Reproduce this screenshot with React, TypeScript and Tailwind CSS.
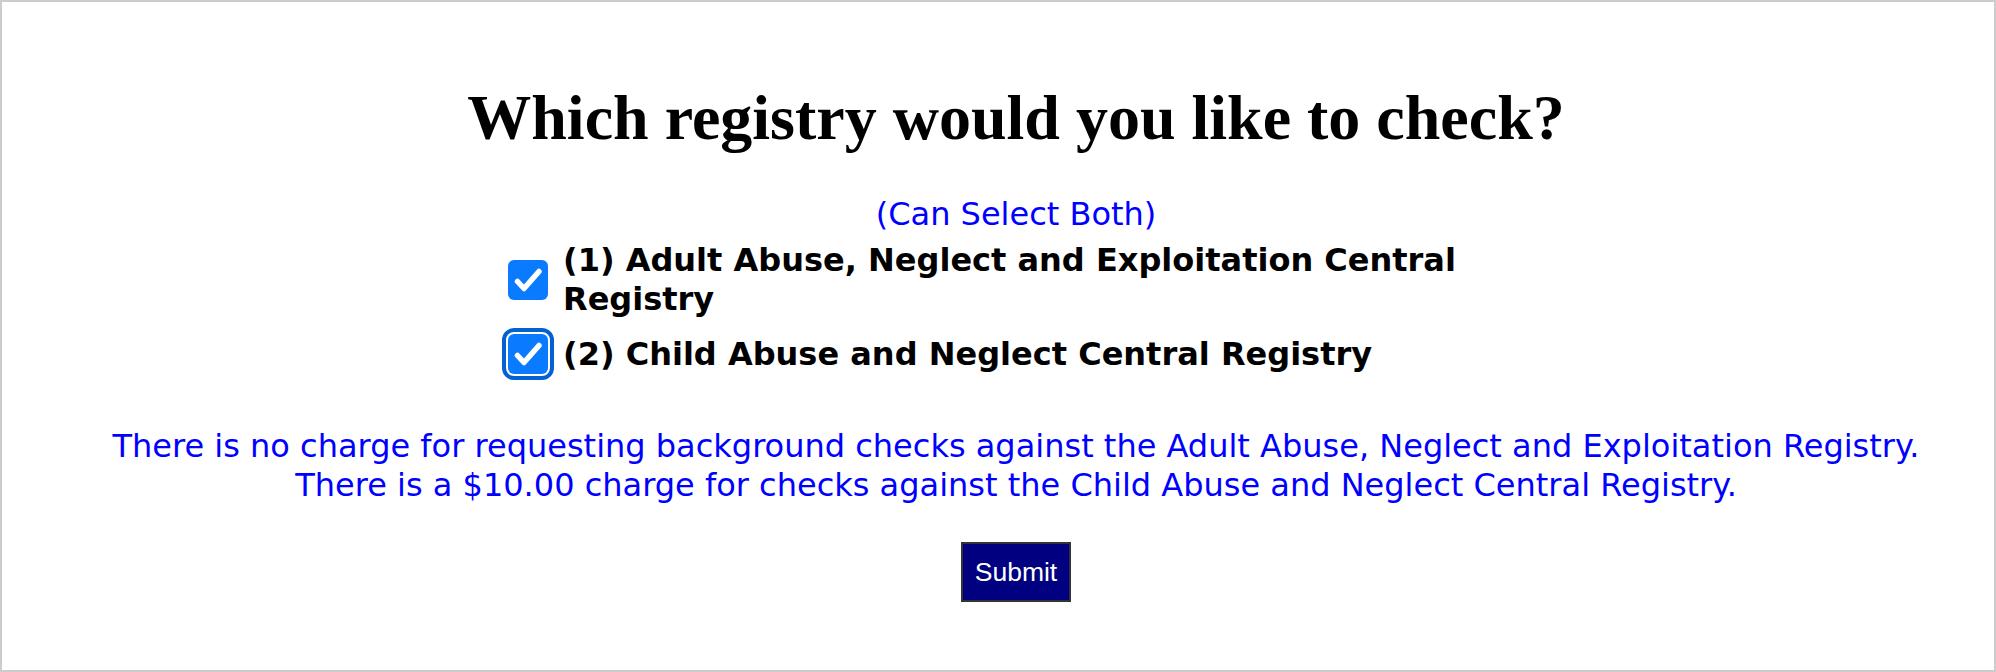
import { useState } from "react";

const CheckMark = () => (
  <svg width="40" height="40" viewBox="0 0 40 40" fill="none">
    <path
      d="M9.5 21.5L16 28.5L31 11.5"
      stroke="white"
      strokeWidth="5.5"
      strokeLinecap="round"
      strokeLinejoin="round"
    />
  </svg>
);

const RegistryOption = ({
  checked,
  focused,
  onToggle,
  label,
}: {
  checked: boolean;
  focused?: boolean;
  onToggle: () => void;
  label: string;
}) => (
  <label className="flex flex-row items-center cursor-pointer">
    <button
      type="button"
      onClick={onToggle}
      className={
        "w-[40px] h-[40px] shrink-0 rounded-[6px] flex items-center justify-center " +
        (checked ? "bg-[#0a7aff] " : "bg-white border-2 border-[#888] ") +
        (focused ? "outline-4 outline-offset-[2px] outline-[#0560d2]" : "")
      }
    >
      {checked && <CheckMark />}
    </button>
    <span className="ml-[15px] max-w-[960px] font-['DejaVu_Sans',sans-serif] font-bold text-[32px] leading-[39px] text-black">
      {label}
    </span>
  </label>
);

export default function App() {
  const [adult, setAdult] = useState(true);
  const [child, setChild] = useState(true);

  return (
    <div className="w-full h-[672px] border-2 border-[#cccccc] bg-white overflow-hidden">
      <div className="flex flex-col items-center pl-[36px]">
        <h1 className="mt-[79px] font-['Liberation_Serif',serif] font-bold text-[64px] leading-[74px] text-black">
          Which registry would you like to check?
        </h1>
        <p className="mt-[40px] font-['DejaVu_Sans',sans-serif] text-[32px] leading-[39px] text-[#0000ff]">
          (Can Select Both)
        </p>
      </div>

      <div className="flex flex-col ml-[506px] mt-[7px]">
        <RegistryOption
          checked={adult}
          onToggle={() => setAdult(!adult)}
          label="(1) Adult Abuse, Neglect and Exploitation Central Registry"
        />
        <div className="mt-[15px]">
          <RegistryOption
            checked={child}
            focused
            onToggle={() => setChild(!child)}
            label="(2) Child Abuse and Neglect Central Registry"
          />
        </div>
      </div>

      <div className="flex flex-col items-center pl-[36px]">
        <p className="mt-[53px] text-center font-['DejaVu_Sans',sans-serif] text-[32px] leading-[39px] text-[#0000ff]">
          There is no charge for requesting background checks against the Adult Abuse, Neglect and Exploitation Registry.
          <br />
          There is a $10.00 charge for checks against the Child Abuse and Neglect Central Registry.
        </p>
        <button
          type="button"
          className="mt-[37px] h-[60px] px-[12px] bg-[#000080] border-2 border-[#333333] text-white font-['Liberation_Sans',sans-serif] text-[26.5px] leading-none"
        >
          Submit
        </button>
      </div>
    </div>
  );
}
